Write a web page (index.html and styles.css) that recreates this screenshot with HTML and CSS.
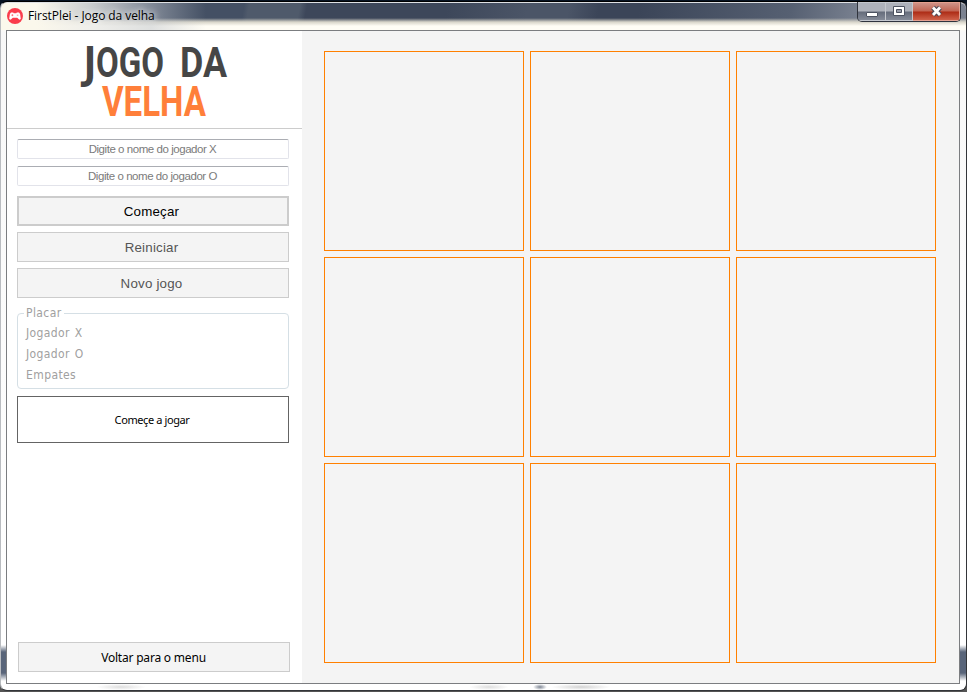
FILE: index.html
```html
<!DOCTYPE html>
<html lang="pt-BR">
<head>
<meta charset="utf-8">
<title>FirstPlei - Jogo da velha</title>
<link rel="stylesheet" href="styles.css">
</head>
<body>
<div class="window">
  <header class="titlebar">
    <svg class="app-icon" viewBox="0 0 16 16"><circle cx="8" cy="8" r="8" fill="#fa3c4c"/><path d="M4 4.500h2.200l.5.700h2.600l.5-.7H12l1.100 1.400.7 5-1.400.8-2.200-2H5.800l-2.200 2-1.400-.8.7-5z" fill="#fff"/><path d="M4.400 7.200h2M5.400 6.200v2M9.800 7.200h1.600" stroke="#fa3c4c" stroke-width=".6"/></svg>
    <h1 class="title">FirstPlei - Jogo da velha</h1>
    <div class="controls">
      <span class="control min"><svg width="28" height="18"><rect x="8.500" y="9.500" width="11" height="4" rx=".5" fill="#fff" stroke="#4d5361"/></svg></span>
      <span class="control max"><svg width="26" height="18"><path d="M7.500 3.500h11v9h-11z" fill="#fff" stroke="#4d5361"/><path d="M10.500 6.500h5v3h-5z" fill="#9a9eaa" stroke="#4d5361"/></svg></span>
      <span class="control close"><svg width="46" height="18"><path d="M20 4.500l7 7.500M27 4.500l-7 7.500" stroke="#4c4b59" stroke-width="5"/><path d="M20 4.500l7 7.500M27 4.500l-7 7.500" stroke="#fff" stroke-width="2.800"/></svg></span>
    </div>
  </header>
  <div class="client">
    <aside class="sidebar">
      <div class="logo">
        <svg width="295" height="97">
          <g class="logo-dark"><text class="logo-j" x="77" y="46" textLength="12" lengthAdjust="spacingAndGlyphs">J</text><text x="89" y="46" textLength="68" lengthAdjust="spacingAndGlyphs">OGO</text><text x="173" y="46" textLength="47" lengthAdjust="spacingAndGlyphs">DA</text></g>
          <text class="logo-orange" x="95" y="85" textLength="104" lengthAdjust="spacingAndGlyphs">VELHA</text>
        </svg>
      </div>
      <div class="panel">
        <input class="field" placeholder="Digite o nome do jogador X">
        <input class="field" placeholder="Digite o nome do jogador O">
        <button class="btn primary">Começar</button>
        <button class="btn muted">Reiniciar</button>
        <button class="btn muted">Novo jogo</button>
        <fieldset class="score"><legend>Placar</legend><div>Jogador X</div><div>Jogador O</div><div>Empates</div></fieldset>
        <div class="status"><span>Começe a jogar</span></div>
        <button class="btn back">Voltar para o menu</button>
      </div>
    </aside>
    <main class="board"><div class="cell"></div><div class="cell"></div><div class="cell"></div><div class="cell"></div><div class="cell"></div><div class="cell"></div><div class="cell"></div><div class="cell"></div><div class="cell"></div></main>
  </div>
</div>
</body>
</html>
```
FILE: styles.css
```css
* { box-sizing: border-box; }
body { margin: 0; width: 967px; height: 692px; overflow: hidden; padding-top: 1px; background: linear-gradient(#071322 0 12px, #555 12px); }
.window { width: 967px; height: 690px; border: 1px solid #333539; border-top-color: #000; border-left-color: #b9bcc0; border-radius: 7px; overflow: hidden; padding: 0 6px 5px 5px; box-shadow: inset 0 1px #dfe1e4;
  background:
    linear-gradient(90deg, #fbf8ec 0 35px, rgba(235,235,232,.8) 90px, rgba(190,195,202,.5) 150px, transparent 205px) 0 0 / 100% 28px no-repeat,
    radial-gradient(ellipse, #7d8593 0, transparent 70%) 532px 100% / 14px 6px no-repeat,
    radial-gradient(ellipse, #d2d2d2 0, transparent 70%) 550px 100% / 60px 6px no-repeat,
    radial-gradient(ellipse, #ddd 0, transparent 70%) 468px 100% / 40px 6px no-repeat,
    radial-gradient(ellipse, #ddd 0, transparent 70%) 95px 100% / 50px 6px no-repeat,
    linear-gradient(transparent 16px, #d8d5c9 20px, #fffdf5 24px, #fffdf5 28px) 0 0 / 100% 28px no-repeat,
    linear-gradient(100deg, #445064 0 240px, #4f5a6b 245px 295px, #3d475a 302px 440px, #4b5567 520px 560px, #3b4558 590px 630px, #566072 780px, #858c9a 870px, #7b8290) 0 0 / 100% 23px no-repeat,
    linear-gradient(#fffdf5 26px, #f8f8f8 30px, #fff 600px, #fff 643px, #59657a 650px, #59657a 671px, #fff 679px); }
.titlebar { height: 28px; display: flex; align-items: flex-start; }
.app-icon { width: 16px; height: 16px; margin: 6px 0 0 1px; }
.title { margin: 6px 0 0 5px; font: 12px/16px "Open Sans", sans-serif; letter-spacing: -.07px; color: #000; text-shadow: 0 0 6px #fff, 0 0 10px #fff; }
.controls { margin: 0 -1px 0 auto; display: flex; height: 20px; border: 1px solid #30343d; border-top: 0; border-radius: 0 0 5px 5px; overflow: hidden; }
.control { height: 19px; border: 1px solid #c5c8ce; border-left-width: 0; background: linear-gradient(#aeb2bb 0 8px, #656c7b 9px, #858b98); display: flex; }
.control svg { flex: none; }
.min { width: 28px; }
.max { width: 27px; }
.close { width: 47px; border-color: #e5a08f; background: linear-gradient(#ce9287 0, #c26553 8px, #ad2c16 9px, #cf624b); }
.client { height: 654px; border: 1px solid #7b7d80; display: flex; background: #f4f4f4; }
.sidebar { width: 295px; background: #fff; display: flex; flex-direction: column; }
.logo { height: 98px; border-bottom: 1px solid #ccc; }
.logo svg { display: block; }
.logo text { font: bold 42px Roboto, sans-serif; }
.logo .logo-j { font: 40px "DejaVu Sans", sans-serif; stroke: #464646; stroke-width: 2px; }
.logo-dark { fill: #464646; }
.logo .logo-orange { fill: #ff7f3a; }
.panel { flex: 1; display: flex; flex-direction: column; padding: 10px 12px 11px 10px; }
.field { width: 272px; height: 20px; margin: 0 0 7px; padding: 0 1px 0 0; border: 1px solid #e2e3ea; border-top-color: #abadb3; border-radius: 2px; text-align: center; font: 11.5px "Liberation Sans", Arial, sans-serif; letter-spacing: -.45px; }
.field::placeholder { color: #7b7b7b; opacity: 1; }
.btn { width: 272px; height: 30px; margin: 0 0 6px; padding: 0 3px 0 0; border: 1px solid #ccc; background: #f4f4f4; font: 13.33px "Liberation Sans", Arial, sans-serif; letter-spacing: .2px; }
.primary { margin-top: 3px; border-width: 2px; color: #000; }
.muted { color: #555; }
.score { width: 272px; height: 84px; margin: 1px 0 0; padding: 2px 8px 0; min-width: 0; border: 1px solid #d5dfe5; border-radius: 4px; color: #a0a0a0; font: 12px/21px "DejaVu Sans Condensed", sans-serif; letter-spacing: .4px; word-spacing: 1px; }
.score legend { margin-left: -2px; padding: 1px 2px 0; line-height: 15px; }
.status { width: 272px; height: 47px; margin-top: 7px; border: 1px solid #646464; display: flex; align-items: center; justify-content: center; padding-right: 2px; font: 11px "Noto Sans", sans-serif; letter-spacing: -.4px; }
.back { margin: auto 0 0 1px; padding: 0 1px 0 0; font: 12px "Noto Sans", sans-serif; letter-spacing: -.2px; color: #000; }
.board { display: grid; grid-template-columns: repeat(3, 200px); grid-template-rows: repeat(3, 200px); gap: 6px; padding: 20px 0 0 22px; }
.cell { border: 1px solid #ff8000; }
```
